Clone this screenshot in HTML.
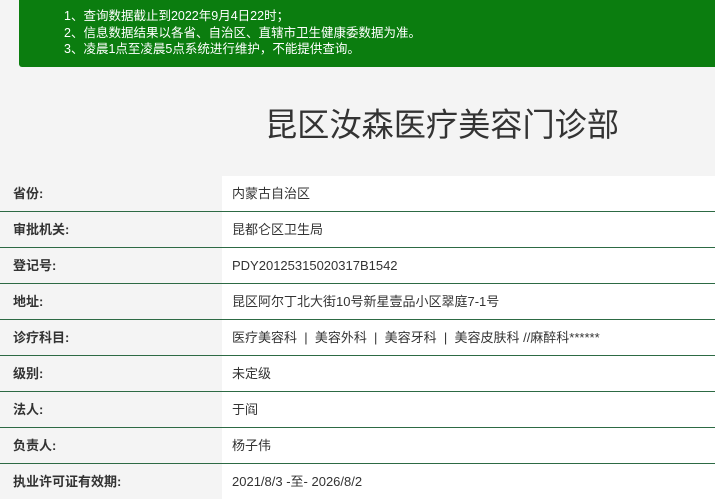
<!DOCTYPE html>
<html><head><meta charset="utf-8"><style>
body{margin:0;width:715px;height:495px;overflow:hidden;background:#f4f4f4;font-family:"Liberation Sans","Noto Sans CJK SC",sans-serif;}
.note{position:absolute;left:19px;top:0;width:696px;height:67px;background:#0b7d0f;border-bottom-left-radius:3px;color:#fff;font-size:12.5px;line-height:16.5px;}
.note div{position:absolute;left:45px;top:8px;}
h1{position:absolute;left:265px;top:101px;margin:0;font-weight:normal;font-size:32.2px;color:#333;line-height:48px;white-space:nowrap;}
.tbl{position:absolute;left:0;top:176px;width:715px;}
.row{height:35px;border-bottom:1px solid #2d6a44;position:relative;font-size:13px;color:#333;}
.row:last-child{border-bottom:none}
.l{position:absolute;left:13px;top:0;line-height:35px;font-weight:bold;}
.v{position:absolute;left:222px;top:0;right:0;height:35px;background:#fff;line-height:35px;padding-left:10px;}
</style></head><body>
<div class="note"><div>1、查询数据截止到2022年9月4日22时；<br>2、信息数据结果以各省、自治区、直辖市卫生健康委数据为准。<br>3、凌晨1点至凌晨5点系统进行维护，不能提供查询。</div></div>
<h1>昆区汝森医疗美容门诊部</h1>
<div class="tbl">
<div class="row"><span class="l">省份:</span><div class="v">内蒙古自治区</div></div>
<div class="row"><span class="l">审批机关:</span><div class="v">昆都仑区卫生局</div></div>
<div class="row"><span class="l">登记号:</span><div class="v">PDY20125315020317B1542</div></div>
<div class="row"><span class="l">地址:</span><div class="v">昆区阿尔丁北大街10号新星壹品小区翠庭7-1号</div></div>
<div class="row"><span class="l">诊疗科目:</span><div class="v">医疗美容科 &nbsp;| &nbsp;美容外科 &nbsp;| &nbsp;美容牙科 &nbsp;| &nbsp;美容皮肤科 //麻醉科******</div></div>
<div class="row"><span class="l">级别:</span><div class="v">未定级</div></div>
<div class="row"><span class="l">法人:</span><div class="v">于阎</div></div>
<div class="row"><span class="l">负责人:</span><div class="v">杨子伟</div></div>
<div class="row"><span class="l">执业许可证有效期:</span><div class="v">2021/8/3 -至- 2026/8/2</div></div>
</div>
</body></html>
